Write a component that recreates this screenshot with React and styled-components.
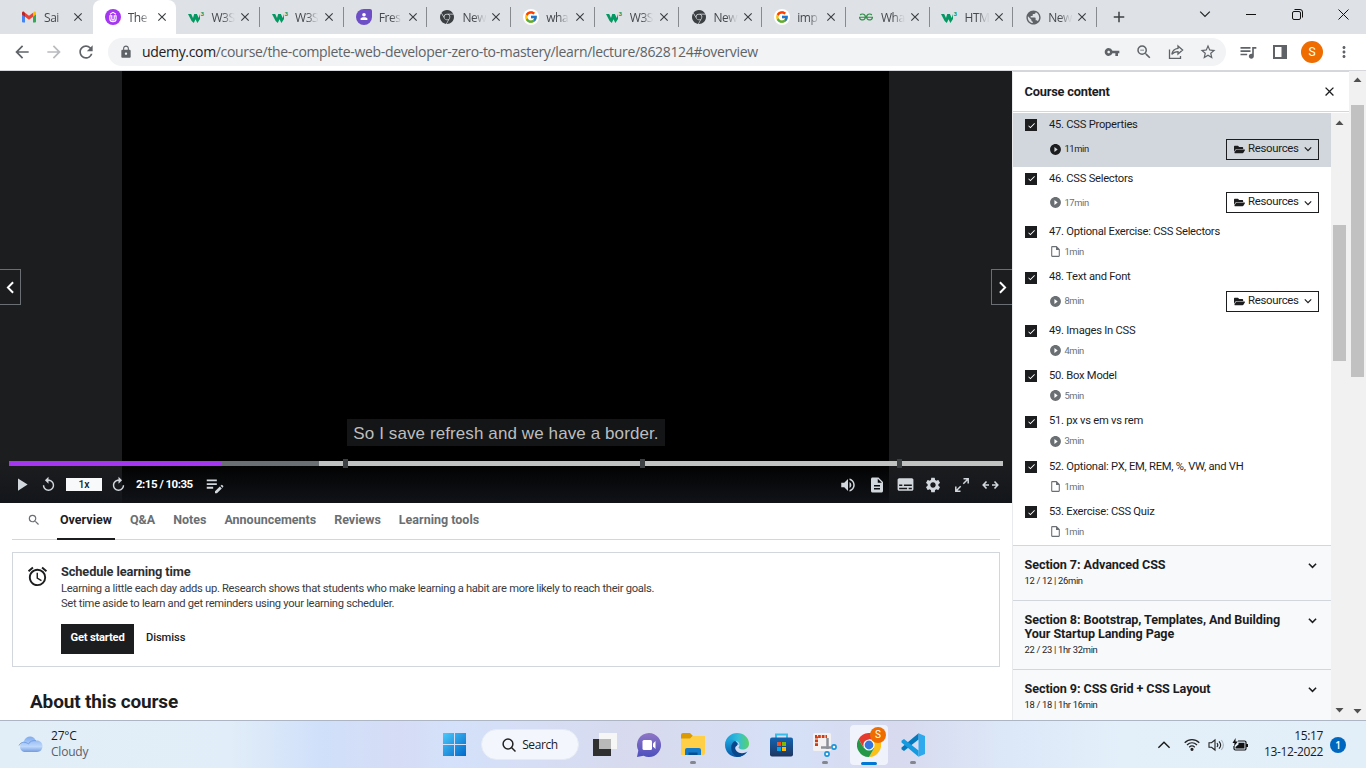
import React from "react";
import styled, { createGlobalStyle } from "styled-components";
import {
  MdArrowBack, MdArrowForward, MdRefresh, MdLock, MdVpnKey, MdZoomOut, MdStarBorder, MdQueueMusic,
  MdMoreVert, MdPlayArrow, MdReplay, MdEditNote, MdVolumeUp, MdDescription, MdSubtitles, MdSettings,
  MdOpenInFull, MdSearch, MdAccessAlarm, MdPlayCircleFilled, MdOutlineInsertDriveFile, MdClose, MdAdd,
  MdPublic, MdCheck,
} from "react-icons/md";
import { FaFolderOpen } from "react-icons/fa";
import { FcGoogle } from "react-icons/fc";
import { SiGooglechrome, SiGeeksforgeeks } from "react-icons/si";

const ui = `"Open Sans", "Noto Sans", sans-serif`;
const page = `Roboto, "Liberation Sans", sans-serif`;
const ink = "#1c1d1f";
const line = "#d1d7dc";

const Global = createGlobalStyle`
  * { box-sizing: border-box; }
  body { margin: 0; overflow: hidden; background: #fff; }
  svg { display: block; flex: none; }
  button { padding: 0; margin: 0; border: 0; background: none; color: inherit; font: inherit; }
`;

const Screen = styled.div`
  width: 1366px; height: 768px; overflow: hidden;
  display: flex; flex-direction: column;
`;

/* Browser chrome */
const TabStrip = styled.div`
  height: 34px; flex: none; background: #dee1e6; display: flex; padding-left: 9px;
  font-family: ${ui}; color: #45494d;
`;
const Tab = styled.div`
  width: 83.7px; height: 34px; padding: 0 0 0 12px; display: flex; align-items: center; position: relative;
  background: ${p => (p.$active ? "#fff" : "transparent")};
  border-radius: 8px 8px 0 0;
  &::after {
    content: ""; position: absolute; right: 0; top: 7px; width: 1px; height: 20px;
    background: ${p => (p.$line ? "#878b90" : "transparent")};
  }
`;
const Favicon = styled.div`
  width: 16px; height: 16px; margin-right: 7px; display: flex; align-items: center; justify-content: center; border-radius: 50%;
  background: ${p => p.$bg || "transparent"}; color: ${p => p.$color || "#3c4043"};
`;
const TabTitle = styled.span`
  width: 24px; margin-right: 3px; white-space: nowrap; font-size: 12px; letter-spacing: -0.45px;
  mask-image: linear-gradient(90deg, #000 50%, rgba(0, 0, 0, 0.1) 90%);
`;
const NewTab = styled.div`
  display: flex; align-items: center; padding-left: 13px; color: #3c4043;
`;
const WindowButtons = styled.div`
  margin-left: auto; display: flex; height: 28px;
`;
const WindowButton = styled.button`
  width: 46px; display: flex; align-items: center; justify-content: center;
`;
const Toolbar = styled.div`
  height: 37px; flex: none; display: flex; align-items: center; padding: 0 6px 1px; border-bottom: 1px solid #d5d7da;
  background: #fff; color: #5f6368;
`;
const ToolButton = styled.button`
  width: 32px; height: 28px; display: flex; align-items: center; justify-content: center; color: ${p => (p.$dim ? "#b9bbbe" : "#5f6368")};
`;
const Omnibox = styled.div`
  flex: 1; height: 28px; margin: 0 6px; border-radius: 14px; background: #f1f3f4;
  display: flex; align-items: center; padding: 0 2px 0 11px;
`;
const Url = styled.div`
  flex: 1; margin-left: 9px; font: 14px ${ui}; letter-spacing: -0.33px; white-space: nowrap; color: #5f6368;
  b { font-weight: 400; color: #202124; }
`;
const Avatar = styled.div`
  width: 22px; height: 22px; border-radius: 50%; background: #ef6c00; color: #fff;
  font: 12px/22px Roboto, sans-serif; text-align: center; margin: 0 5px;
`;

/* Page */
const Viewport = styled.div`
  height: 649px; flex: none; display: flex; overflow: hidden; font-family: ${page}; color: ${ink};
`;
const Main = styled.main`
  width: 1012px; flex: none; overflow: hidden;
`;
const Player = styled.section`
  height: 432px; position: relative; display: flex; flex-direction: column;
  background: linear-gradient(90deg, #1c1d1f 122px, #000 122px, #000 889px, #1c1d1f 889px);
`;
const StepButton = styled.button`
  position: absolute; top: 198px; ${p => (p.$next ? "right: -1px" : "left: -1px")};
  width: 22px; height: 36px; border: 1px solid #6a6f73; background: #1c1d1f; display: flex; align-items: center; justify-content: center;
`;
const CaptionArea = styled.div`
  flex: 1; display: flex; align-items: flex-end; justify-content: center; padding-bottom: 14px;
`;
const Caption = styled.div`
  width: 318px; height: 27px; background: #141517; color: #bdbebe; text-align: center;
  font: 17px/29px "Liberation Sans", sans-serif; letter-spacing: 0.1px; white-space: nowrap;
`;
const ControlShade = styled.div`
  height: 43px; display: flex; flex-direction: column; flex: none;
  background: linear-gradient(rgba(18, 21, 26, 0), rgba(18, 21, 26, 0.9));
`;
const Progress = styled.div`
  height: 5px; margin: 1px 9px 0; flex: none; position: relative;
  background: linear-gradient(90deg, #a435f0 212px, #6a6f73 212px, #6a6f73 310px, #c0c2c2 310px);
`;
const Marker = styled.i`
  position: absolute; top: -2px; width: 5px; height: 9px; background: #3e4143;
`;
const Controls = styled.div`
  flex: 1; display: flex; align-items: center; color: #d1d7dc; padding: 0 8px 0 11px;
`;
const Control = styled.button`
  width: ${p => p.$w || 28.4}px; display: flex; justify-content: center;
`;
const Rate = styled.div`
  width: 36px; height: 13px; background: #f7f9fa; color: ${ink}; font-size: 10.5px; line-height: 13px; font-weight: 500;
  text-align: center; margin: 0 6px 0 0;
`;
const Clock = styled.div`
  width: 56px; margin: 0 12px 2px 8px; color: #fff; font-weight: 700; font-size: 11.5px; letter-spacing: -0.5px; white-space: nowrap;
`;
const Spacer = styled.div`flex: 1;`;

const Nav = styled.nav`
  height: 37px; margin: 0 12px; border-bottom: 1px solid ${line}; display: flex; padding-left: 15px; color: #6a6f73;
`;
const NavSearch = styled.div`
  width: 30px; padding: 10px 0 0 0;
`;
const NavItem = styled.div`
  height: 37px; padding: 0 3px; margin-right: 12px; line-height: 34px; font-weight: 700; font-size: 12.5px; white-space: nowrap;
  color: ${p => (p.$on ? ink : "#6a6f73")};
  border-bottom: ${p => (p.$on ? `2px solid ${ink}` : "0")};
`;
const ScheduleCard = styled.section`
  height: 115px; margin: 12px 12px 0; border: 1px solid ${line}; padding: 12px 13px; display: flex; gap: 12px;
`;
const CardTitle = styled.h3`
  margin: 0; font-size: 12.8px; line-height: 14px; font-weight: 700; letter-spacing: -0.12px; color: #2d2f31;
`;
const CardText = styled.p`
  margin: 2px 0 0; font-size: 11.2px; line-height: 15px; letter-spacing: -0.295px; color: #3a3c3f; white-space: nowrap;
`;
const Actions = styled.div`
  display: flex; align-items: center; margin-top: 13px; font-size: 11.2px; font-weight: 700;
`;
const Primary = styled.button`
  width: 73px; height: 30px; background: ${ink}; color: #fff; margin-right: 12px; letter-spacing: -0.2px; padding-bottom: 3px;
`;
const Secondary = styled.button`
  padding-bottom: 3px; font-weight: 500; letter-spacing: -0.1px;
`;
const About = styled.h2`
  margin: 24px 0 0 30px; font-size: 19px; line-height: 22px; font-weight: 700; white-space: nowrap; letter-spacing: -0.16px;
`;

const Side = styled.aside`
  width: 337px; flex: none; border-left: 1px solid #e8eaec; display: flex; flex-direction: column;
`;
const SideHeader = styled.header`
  height: 41px; border-top: 1px solid ${line}; border-bottom: 1px solid ${line}; flex: none;
  display: flex; align-items: center; justify-content: space-between; padding: 0 12px 1px 11.5px;
  font-size: 12.8px; font-weight: 700; letter-spacing: -0.2px;
`;
const SideBody = styled.div`
  height: 608px; display: flex; padding-top: 1px;
`;
const Lectures = styled.div`
  width: 318px; height: 607px; overflow: hidden;
`;
const Lecture = styled.div`
  height: ${p => p.$h}px; background: ${p => (p.$on ? line : "#fff")}; color: ${ink};
  display: flex; padding: 0 12px; gap: 12px;
`;
const CheckBox = styled.div`
  width: 12px; height: 12px; margin-top: 6.4px; background: ${ink}; color: #fff; display: flex; align-items: center; justify-content: center; flex: none;
`;
const LectureInfo = styled.div`flex: 1;`;
const LectureTitle = styled.div`
  height: 23px; line-height: 23px; font-size: 11.2px; letter-spacing: -0.25px; white-space: nowrap;
`;
const LectureMeta = styled.div`
  height: ${p => (p.$tall ? 26 : 18)}px; display: flex; align-items: center; justify-content: space-between;
`;
const Duration = styled.div`
  display: flex; align-items: center; gap: 3px; font-size: 9.4px; line-height: 12px; letter-spacing: -0.4px; margin-left: -0.5px;
  color: ${p => (p.$on ? ink : "#6a6f73")};
`;
const Resources = styled.button`
  width: 93px; height: 21px; border: 1px solid ${ink}; display: flex; align-items: center; padding: 0 7px; font-size: 11.4px; letter-spacing: -0.3px;
  span { margin: 0 5px 3px 3px; }
`;
const Section = styled.div`
  height: ${p => p.$h}px; border-top: 1px solid ${line}; background: #f7f9fa; padding: 12px 14px 0 11.5px;
  display: flex; justify-content: space-between;
  > svg { margin-top: 3px; }
`;
const SectionTitle = styled.div`
  font-size: 12.6px; font-weight: 700; line-height: 14px; white-space: nowrap; letter-spacing: -0.08px;
`;
const SectionMeta = styled.div`
  font-size: 9.4px; line-height: 16px; margin-top: 1px; letter-spacing: -0.3px;
`;
const Scrollbar = styled.div`
  width: ${p => p.$w}px; flex: none; background: #f1f1f1; position: relative; display: flex; flex-direction: column; justify-content: space-between; align-items: center;
  padding: ${p => p.$pad || "6px 0"};
`;
const Thumb = styled.div`
  position: absolute; left: 2px; width: 13px; top: ${p => p.$top}px; height: ${p => p.$h}px; background: #c1c1c1;
`;

/* Taskbar */
const Taskbar = styled.footer`
  height: 48px; flex: none; border-top: 1px solid #acb6c5;
  background: linear-gradient(90deg, #e2eef7 0, #e1edf8 230px, #d0e0fa 320px, #d6dcf5 400px, #d4e1fa 450px, #d8daee 640px, #d5e0f7 790px, #d8daef 900px, #dce8f8 1010px, #e3eff9 1120px, #e2eef8 1366px);
  font: 12px ${ui}; color: #1a1a1a; display: flex; align-items: center;
`;
const Weather = styled.div`
  width: 432px; padding-left: 18px; display: flex; align-items: center; gap: 8px; line-height: 16px; letter-spacing: -0.2px; padding-bottom: 1px;
  span { color: #5a6068; }
`;
const TaskItem = styled.div`
  width: 38px; height: 40px; margin: 0 3px; border-radius: 4px; display: flex; align-items: center; justify-content: center; position: relative;
  background: ${p => (p.$on ? "rgba(248,250,255,.75)" : "transparent")};
  &::after {
    content: ""; position: absolute; bottom: ${p => (p.$on ? 0 : 1)}px; height: 3px; border-radius: 2px;
    width: ${p => (p.$on ? 16 : p.$open ? 6 : 0)}px; background: ${p => (p.$on ? "#0078d4" : "#82868f")};
  }
`;
const SearchPill = styled.div`
  width: 98px; height: 31px; border-radius: 16px; margin: 0 4px 0 5px; background: #f3f7fd; border: 1px solid #e5ebf5;
  display: flex; align-items: center; justify-content: center; gap: 6px; letter-spacing: -0.4px;
`;
const ProfileBadge = styled.div`
  position: absolute; right: 2px; top: 2px; width: 16px; height: 16px; border-radius: 50%; background: #ef6c00; color: #fff;
  font: 10px/16px Roboto, sans-serif; text-align: center;
`;
const Tray = styled.div`
  margin-left: auto; display: flex; align-items: center; padding-right: 20px;
`;
const TrayIcons = styled.div`
  display: flex; align-items: center; gap: 8px; margin-left: 13px;
`;
const DateTime = styled.div`
  width: 75px; text-align: right; line-height: 16px; margin: 0 7px 1px 0; letter-spacing: -0.35px; white-space: nowrap;
`;
const Count = styled.div`
  width: 16px; height: 16px; border-radius: 50%; background: #0067c0; color: #fff; font: 600 10px/16px ${ui}; text-align: center;
`;

const Gmail = () => (
  <svg width="14" height="12" viewBox="0 0 14 11">
    <path d="M0 1.5V10a1 1 0 0 0 1 1h2V4Z" fill="#4285f4" />
    <path d="M14 1.5V10a1 1 0 0 1-1 1h-2V4Z" fill="#34a853" />
    <path d="M11 1.2 12 .3C13 -.3 14 .4 14 1.5V3l-3 2.3Z" fill="#fbbc04" />
    <path d="M3 1.2 2 .3C1-.3 0 .4 0 1.5V3l3 2.3Z" fill="#c5221f" />
    <path d="M3 1.2 7 4.2l4-3v4.1l-4 3-4-3Z" fill="#ea4335" />
  </svg>
);
const Udemy = () => (
  <svg width="16" height="16" viewBox="0 0 16 16">
    <circle cx="8" cy="8" r="8" fill="#a435f0" />
    <path d="M5 5.200 8 3.400l3 1.800M4.900 6.800v3.100c0 3.600 6.200 3.600 6.200 0V6.800H9.200v3.100c0 1.300-2.400 1.300-2.400 0V6.800Z" fill="none" stroke="#fff" strokeWidth="1.100" />
  </svg>
);
const W3 = () => (
  <svg width="17" height="14" viewBox="0 0 17 14">
    <path d="M0 4h3.200l1.800 4 1.200-4h2.700l1.800 4L12 4v5l-2.600 4L7.500 9.200 5.800 13 3.600 11Z" fill="#059862" />
    <text x="12.500" y="5.700" fontFamily="Roboto" fontWeight="700" fontSize="6" fill="#059862">3</text>
  </svg>
);
const Person = () => (
  <svg width="16" height="16" viewBox="0 0 16 16">
    <path d="M8 0h6a2 2 0 0 1 2 2v6a8 8 0 1 1-8-8Z" fill="#6e4ec6" />
    <circle cx="8" cy="5.700" r="1.800" fill="#fff" /><path d="M4.600 11V9.700c0-2 6.800-2 6.800 0V11Z" fill="#fff" />
  </svg>
);
const ChevronPaths = { down: "M1 3l4 4 4-4", up: "M1 7l4-4 4 4", left: "M7 1 3 5l4 4", right: "M3 1l4 4-4 4" };
const Chevron = ({ size = 8, dir = "down", w = 1.4, color = "currentColor" }) => (
  <svg width={size} height={size} viewBox="0 0 10 10"><path d={ChevronPaths[dir]} fill="none" stroke={color} strokeWidth={w} /></svg>
);
const Arrow = ({ up }) => (
  <svg width="9" height="5" viewBox="0 0 9 5"><path d={up ? "M0.500 5 4.500 .500 8.500 5Z" : "M.500 0h8L4.500 4.500Z"} fill="#505050" /></svg>
);
const Share = () => (
  <svg width="16" height="16" viewBox="0 0 16 16" fill="none" stroke="currentColor" strokeWidth="1.300">
    <path d="M1.500 5.500v8.800h11V12M10 2l4.600 4L10 10V7.600c-3 0-4.600.7-6.200 2.800C4.300 7 6.400 4.800 10 4.400Z" />
  </svg>
);
const SidePanel = () => (
  <svg width="14" height="14" viewBox="0 0 14 14"><path fillRule="evenodd" d="M0 0h14v14H0ZM2 2v10h6.500V2Z" fill="currentColor" /></svg>
);
const Expand = () => (
  <svg width="17" height="12" viewBox="0 0 17 12" fill="none" stroke="currentColor" strokeWidth="1.600">
    <path d="M4.500 2.500 1.200 6l3.300 3.500M12.500 2.500 15.800 6l-3.300 3.500M1.500 6H7M10 6h5.500" />
  </svg>
);
const Fullscreen = () => (
  <svg width="14" height="14" viewBox="0 0 14 14" fill="none" stroke="currentColor" strokeWidth="1.500">
    <path d="M8.500.8h4.700v4.700M13 1 8.300 5.700M.8 8.500v4.700h4.700M1 13l4.700-4.700" />
  </svg>
);
const Cloud = () => (
  <svg width="25" height="17" viewBox="0 0 25 17">
    <defs><linearGradient id="cl" x2="0" y2="1"><stop stopColor="#7fabed" /><stop offset=".65" stopColor="#bed8fc" /><stop offset="1" stopColor="#719bdf" /></linearGradient></defs>
    <path d="M6 16a5.500 5.500 0 0 1-.2-10.500C7.500-.5 15.500-1.500 17.800 4.500 22 4 24.500 7 24.500 10s-2 6-5.500 6Z" fill="url(#cl)" />
    <path d="M1 9.500C3 5 8 6 10.500 8 12 5 15 4.200 18 4.700" fill="none" stroke="#6996df" strokeWidth=".8" />
  </svg>
);
const WindowsLogo = () => (
  <svg width="23" height="23" viewBox="0 0 23 23">
    <defs><linearGradient id="win" gradientUnits="userSpaceOnUse" x1="0" y1="0" x2="23" y2="23"><stop stopColor="#4cc8fa" /><stop offset="1" stopColor="#0069ca" /></linearGradient></defs>
    <path d="M0 0h11v11H0ZM12 0h11v11H12ZM0 12h11v11H0ZM12 12h11v11H12Z" fill="url(#win)" />
  </svg>
);
const SearchGlass = () => (
  <svg width="14" height="14" viewBox="0 0 14 14" fill="none" stroke="#222" strokeWidth="1.500"><circle cx="6" cy="6" r="4.900" /><path d="m9.500 9.500 4 4" /></svg>
);
const TaskView = () => (
  <svg width="24" height="24" viewBox="0 0 24 24">
    <path d="M6 0h18v16H6Z" fill="#f6f6f6" /><path d="M0 6h18v17H0Z" fill="#303030" /><path d="M6 6h12v10H6Z" fill="#b9b9b9" />
  </svg>
);
const Chat = () => (
  <svg width="24" height="24" viewBox="0 0 24 24">
    <defs><linearGradient id="chat" x2="0" y2="1"><stop stopColor="#8f76c5" /><stop offset="1" stopColor="#4c50be" /></linearGradient></defs>
    <path d="M12 0a12 12 0 1 1-5.400 22.700L0 24l1.300-6.500A12 12 0 0 1 12 0Z" fill="url(#chat)" />
    <rect x="5.500" y="7" width="9.500" height="10" rx="1.500" fill="#fff" /><path d="m16 10.500 2.500-2.500v8L16 13.500Z" fill="#fff" />
  </svg>
);
const Explorer = () => (
  <svg width="24" height="23" viewBox="0 0 24 23">
    <path d="M0 2a2 2 0 0 1 2-2h7l3 3h10v8H0Z" fill="#d99a05" /><path d="M0 5.500h9L11.500 3H24v17a2 2 0 0 1-2 2H0Z" fill="#ffcf48" />
    <path d="M4 22v-5a2 2 0 0 1 2-2h12a2 2 0 0 1 2 2v5Z" fill="#127ac9" /><path d="M7.500 22v-2.500h9V22Z" fill="#064e91" />
  </svg>
);
const Edge = () => (
  <svg width="24" height="24" viewBox="0 0 24 24">
    <defs>
      <linearGradient id="ed1" x2="1"><stop stopColor="#159ad8" /><stop offset=".55" stopColor="#35bed8" /><stop offset="1" stopColor="#58d365" /></linearGradient>
      <linearGradient id="ed2" x2="0" y2="1"><stop stopColor="#1da4df" /><stop offset="1" stopColor="#0755a6" /></linearGradient>
    </defs>
    <path d="M0 11C1 4 6 0 12 0c7 0 12 5 12 10.500 0 4-3 6-6.500 6-3 0-4-1.500-4-2.200 2-2 1-6.300-3.500-6.300C5 8 1 9 0 11Z" fill="url(#ed1)" />
    <path d="M0 12c0-4 4-6.500 8.500-5 3 1 5 3 5 5-5-2-7 4-3 7.500 4 3 9 2 12-1C20 22 16.500 24 12 24 5 24 0 18.500 0 12Z" fill="url(#ed2)" />
    <path d="M10 8C5 10 4.500 19 11 23.500c2 .5 4 .3 6-.7 2.500-1 4.500-3 5.500-4.300-3 2-8 2.500-11-.5-2-2.500-1.500-4 0-5 1-.600 2-2-1.500-5Z" fill="#08478b" />
  </svg>
);
const Store = () => (
  <svg width="23" height="24" viewBox="0 0 23 24">
    <defs><linearGradient id="store" x2="0" y2="1"><stop stopColor="#1264b2" /><stop offset="1" stopColor="#20355f" /></linearGradient></defs>
    <path d="M6 6V1.500h11V6" fill="none" stroke="#38bde8" strokeWidth="2" /><rect y="4.500" width="23" height="19" rx="2" fill="url(#store)" />
    <path d="M7 9h4v4H7Z" fill="#f25022" /><path d="M12 9h4v4h-4Z" fill="#7fba00" /><path d="M7 14h4v4H7Z" fill="#00a4ef" /><path d="M12 14h4v4h-4Z" fill="#ffb900" />
  </svg>
);
const Snip = () => (
  <svg width="24" height="24" viewBox="0 0 24 24">
    <rect width="18" height="18" rx="1.500" fill="#f3f1f1" />
    <path d="M3.500 13V3.500H14" fill="none" stroke="#d03b12" strokeWidth="3" strokeDasharray="2.700 1" />
    <path d="M14.500 5v11M8 14.500h10" stroke="#8d9197" strokeWidth="2.500" /><circle cx="21" cy="14" r="2.100" fill="#fff" stroke="#1694dc" strokeWidth="1.600" /><circle cx="14" cy="21" r="2.100" fill="#fff" stroke="#1694dc" strokeWidth="1.600" />
  </svg>
);
const ChromeLogo = () => (
  <svg width="24" height="24" viewBox="0 0 24 24" style={{ marginRight: 1 }}>
    <path d="M12 12V0l10.400 6A12 12 0 0 1 12 24l5.200-9Z" fill="#fbc116" />
    <path d="M12 12 6.800 15 1.600 6A12 12 0 0 0 12 24l5.200-9Z" fill="#249846" />
    <path d="M12 12 6.800 15 1.600 6A12 12 0 0 1 22.400 6H12Z" fill="#e53b2e" />
    <circle cx="12" cy="12" r="5.600" fill="#fff" /><circle cx="12" cy="12" r="4.400" fill="#3576e1" />
  </svg>
);
const Code = () => (
  <svg width="24" height="24" viewBox="0 0 24 24">
    <path d="M17.500.3 24 3v18l-6.500 2.700Z" fill="#2fa9ee" /><path d="M17.500.3v6.200L3 18 .5 16.200V14.500Z" fill="#0479bd" />
    <path d="M17.500 23.700v-6.200L3 6 .5 7.800v1.700Z" fill="#159adf" />
  </svg>
);
const Wifi = () => (
  <svg width="16" height="13" viewBox="0 0 16 13" fill="none" stroke="#222" strokeWidth="1.200">
    <path d="M.7 4.700C5 .5 11 .5 15.300 4.700M3 7c3-3 7-3 10 0M5.200 9.200c1.700-1.500 3.900-1.500 5.600 0" /><circle cx="8" cy="11.300" r="1" fill="#222" />
  </svg>
);
const Speaker = () => (
  <svg width="16" height="14" viewBox="0 0 16 14" fill="none" stroke="#222" strokeWidth="1.100">
    <path d="M1 4.800h2.500L7 2v10L3.500 9.200H1ZM9 5c1 1.200 1 2.800 0 4M11 3.300c2 2.200 2 5.200 0 7.400" /><path d="M13.300 2c2.500 3 2.500 7 0 10" stroke="#aab3bd" />
  </svg>
);
const Battery = () => (
  <svg width="16" height="14" viewBox="0 0 16 14">
    <path d="M6 3h6.500A1.500 1.500 0 0 1 14 4.500v6a1.500 1.500 0 0 1-1.500 1.500h-9A1.500 1.500 0 0 1 2 10.500V8" fill="none" stroke="#111" strokeWidth="1.200" />
    <path d="M6.500 4.700h6v5.800h-9V9l3-2.500ZM14 6h2v3h-2ZM3.600 0 .5 5h2L2 8.500 5.800 3.500H3.500Z" fill="#111" />
  </svg>
);

const google = { icon: <FcGoogle size={14} />, bg: "#fff" };
const tabs = [
  { t: "Sai", icon: <Gmail /> },
  { t: "The", icon: <Udemy />, active: true },
  { t: "W3S", icon: <W3 />, line: true },
  { t: "W3S", icon: <W3 />, line: true },
  { t: "Fres", icon: <Person />, line: true },
  { t: "New", icon: <SiGooglechrome size={14} />, line: true },
  { t: "wha", ...google, line: true },
  { t: "W3S", icon: <W3 />, line: true },
  { t: "New", icon: <SiGooglechrome size={14} />, line: true },
  { t: "imp", ...google, line: true },
  { t: "Wha", icon: <SiGeeksforgeeks size={14} />, color: "#2f8d46", line: true },
  { t: "HTM", icon: <W3 />, line: true },
  { t: "New", icon: <MdPublic size={17} />, color: "#5f6368", line: true },
];

const lectures = [
  { t: "45. CSS Properties", d: "11min", res: true, on: true, h: 53.5 },
  { t: "46. CSS Selectors", d: "17min", res: true, h: 53.4 },
  { t: "47. Optional Exercise: CSS Selectors", d: "1min", file: true, h: 45.4 },
  { t: "48. Text and Font", d: "8min", res: true, h: 53.4 },
  { t: "49. Images In CSS", d: "4min", h: 45.3 },
  { t: "50. Box Model", d: "5min", h: 45.3 },
  { t: "51. px vs em vs rem", d: "3min", h: 45.3 },
  { t: "52. Optional: PX, EM, REM, %, VW, and VH", d: "1min", file: true, h: 45.2 },
  { t: "53. Exercise: CSS Quiz", d: "1min", file: true, h: 45.2 },
];

function BrowserChrome() {
  return (
    <>
      <TabStrip>
        {tabs.map((tab, i) => (
          <Tab key={i} $active={tab.active} $line={tab.line}>
            <Favicon $bg={tab.bg} $color={tab.color}>{tab.icon}</Favicon>
            <TabTitle>{tab.t}</TabTitle>
            <MdClose size={14} color="#3c4043" />
          </Tab>
        ))}
        <NewTab><MdAdd size={18} /></NewTab>
        <WindowButtons>
          <WindowButton><Chevron size={12} w={1} color="#222" /></WindowButton>
          <WindowButton><svg width="10" height="2"><path d="M0 1.500h10" stroke="#111" /></svg></WindowButton>
          <WindowButton>
            <svg width="11" height="11" viewBox="0 0 11 11" fill="none" stroke="#111"><rect x=".5" y="2.500" width="8" height="8" rx="1.500" /><path d="M2.500.5H8a2.500 2.500 0 0 1 2.500 2.500v5.500" /></svg>
          </WindowButton>
          <WindowButton><svg width="11" height="11"><path d="m.5.5 10 10M10.500.5l-10 10" stroke="#111" /></svg></WindowButton>
        </WindowButtons>
      </TabStrip>
      <Toolbar>
        <ToolButton><MdArrowBack size={20} /></ToolButton>
        <ToolButton $dim><MdArrowForward size={20} /></ToolButton>
        <ToolButton><MdRefresh size={20} /></ToolButton>
        <Omnibox>
          <MdLock size={14} />
          <Url><b>udemy.com</b>/course/the-complete-web-developer-zero-to-mastery/learn/lecture/8628124#overview</Url>
          <ToolButton><MdVpnKey size={16} /></ToolButton>
          <ToolButton><MdZoomOut size={18} /></ToolButton>
          <ToolButton><Share /></ToolButton>
          <ToolButton><MdStarBorder size={18} /></ToolButton>
        </Omnibox>
        <ToolButton><MdQueueMusic size={20} /></ToolButton>
        <ToolButton><SidePanel /></ToolButton>
        <Avatar>S</Avatar>
        <ToolButton><MdMoreVert size={18} /></ToolButton>
      </Toolbar>
    </>
  );
}

function VideoPlayer() {
  return (
    <Player>
      <StepButton><Chevron dir="left" size={13} w={1.5} color="#fff" /></StepButton>
      <StepButton $next><Chevron dir="right" size={13} w={1.5} color="#fff" /></StepButton>
      <CaptionArea><Caption>So I save refresh and we have a border.</Caption></CaptionArea>
      <ControlShade>
        <Progress>
          {[334, 631, 888].map(x => <Marker key={x} style={{ left: x }} />)}
        </Progress>
        <Controls>
          <Control $w={20}><MdPlayArrow size={21} /></Control>
          <Control $w={35}><MdReplay size={17} /></Control>
          <Rate>1x</Rate>
          <Control $w={20}><MdReplay size={17} transform="scale(-1 1)" /></Control>
          <Clock>2:15 / 10:35</Clock>
          <MdEditNote size={22} />
          <Spacer />
          <Control><MdVolumeUp size={18} /></Control>
          <Control><MdDescription size={18} /></Control>
          <Control><MdSubtitles size={19} /></Control>
          <Control><MdSettings size={18} /></Control>
          <Control><Fullscreen /></Control>
          <Control $w={28}><Expand /></Control>
        </Controls>
      </ControlShade>
    </Player>
  );
}

function CourseSidebar() {
  return (
    <Side>
      <SideHeader>Course content<MdClose size={15} /></SideHeader>
      <SideBody>
        <Lectures>
          {lectures.map(l => (
            <Lecture key={l.t} $h={l.h} $on={l.on}>
              <CheckBox><MdCheck size={9} /></CheckBox>
              <LectureInfo>
                <LectureTitle>{l.t}</LectureTitle>
                <LectureMeta $tall={l.res}>
                  <Duration $on={l.on}>
                    {l.file ? <MdOutlineInsertDriveFile size={13} /> : <MdPlayCircleFilled size={13} />}
                    {l.d}
                  </Duration>
                  {l.res && <Resources><FaFolderOpen size={11} /><span>Resources</span><Chevron size={8} w={1.5} /></Resources>}
                </LectureMeta>
              </LectureInfo>
            </Lecture>
          ))}
          <Section $h={55.5}>
            <div><SectionTitle>Section 7: Advanced CSS</SectionTitle><SectionMeta>12 / 12 | 26min</SectionMeta></div>
            <Chevron size={9} w={1.7} />
          </Section>
          <Section $h={69}>
            <div><SectionTitle>Section 8: Bootstrap, Templates, And Building<br />Your Startup Landing Page</SectionTitle><SectionMeta>22 / 23 | 1hr 32min</SectionMeta></div>
            <Chevron size={9} w={1.7} />
          </Section>
          <Section $h={60}>
            <div><SectionTitle>Section 9: CSS Grid + CSS Layout</SectionTitle><SectionMeta>18 / 18 | 1hr 16min</SectionMeta></div>
            <Chevron size={9} w={1.7} />
          </Section>
        </Lectures>
        <Scrollbar $w={18} $pad="7px 1px 7px 0"><Arrow up /><Thumb $top={112} $h={136} /><Arrow /></Scrollbar>
      </SideBody>
    </Side>
  );
}

export default function App() {
  return (
    <Screen>
      <Global />
      <BrowserChrome />
      <Viewport>
        <Main>
          <VideoPlayer />
          <Nav>
            <NavSearch><MdSearch size={14} /></NavSearch>
            <NavItem $on>Overview</NavItem>
            <NavItem>Q&amp;A</NavItem>
            <NavItem>Notes</NavItem>
            <NavItem>Announcements</NavItem>
            <NavItem>Reviews</NavItem>
            <NavItem>Learning tools</NavItem>
          </Nav>
          <ScheduleCard>
            <MdAccessAlarm size={23} />
            <div>
              <CardTitle>Schedule learning time</CardTitle>
              <CardText>Learning a little each day adds up. Research shows that students who make learning a habit are more likely to reach their goals.<br />Set time aside to learn and get reminders using your learning scheduler.</CardText>
              <Actions><Primary>Get started</Primary><Secondary>Dismiss</Secondary></Actions>
            </div>
          </ScheduleCard>
          <About>About this course</About>
        </Main>
        <CourseSidebar />
        <Scrollbar $w={17}><Arrow up /><Thumb $top={34} $h={272} /><Arrow /></Scrollbar>
      </Viewport>
      <Taskbar>
        <Weather><Cloud /><div>27°C<br /><span>Cloudy</span></div></Weather>
        <TaskItem><WindowsLogo /></TaskItem>
        <SearchPill><SearchGlass />Search</SearchPill>
        <TaskItem><TaskView /></TaskItem>
        <TaskItem><Chat /></TaskItem>
        <TaskItem $open><Explorer /></TaskItem>
        <TaskItem><Edge /></TaskItem>
        <TaskItem><Store /></TaskItem>
        <TaskItem $open><Snip /></TaskItem>
        <TaskItem $on><ChromeLogo /><ProfileBadge>S</ProfileBadge></TaskItem>
        <TaskItem $open><Code /></TaskItem>
        <Tray>
          <Chevron dir="up" size={14} w={1} />
          <TrayIcons><Wifi /><Speaker /><Battery /></TrayIcons>
          <DateTime>15:17<br />13-12-2022</DateTime>
          <Count>1</Count>
        </Tray>
      </Taskbar>
    </Screen>
  );
}
